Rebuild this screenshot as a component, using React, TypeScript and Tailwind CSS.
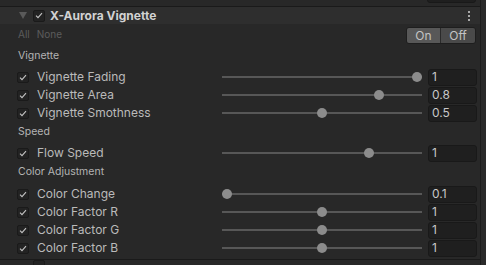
import React from "react";

type Row = { label: string; value: string; t: number };

const sections: { title: string; titleH: string; pad: string; rows: Row[] }[] = [
  {
    title: "Vignette",
    titleH: "h-[24px]",
    pad: "",
    rows: [
      { label: "Vignette Fading", value: "1", t: 1 },
      { label: "Vignette Area", value: "0.8", t: 0.8 },
      { label: "Vignette Smothness", value: "0.5", t: 0.5 },
    ],
  },
  { title: "Speed", titleH: "h-[20px]", pad: "pt-[2px]", rows: [{ label: "Flow Speed", value: "1", t: 0.747 }] },
  {
    title: "Color Adjustment",
    titleH: "h-[20px]",
    pad: "pt-[3px]",
    rows: [
      { label: "Color Change", value: "0.1", t: 0 },
      { label: "Color Factor R", value: "1", t: 0.5 },
      { label: "Color Factor G", value: "1", t: 0.5 },
      { label: "Color Factor B", value: "1", t: 0.5 },
    ],
  },
];

function Check({ big = false }: { big?: boolean }) {
  return (
    <div
      className={`flex items-center justify-center rounded-[2px] border border-[#1a1a1a] bg-[#232323] ${
        big ? "h-[12px] w-[12px]" : "h-[11px] w-[12px]"
      }`}
    >
      <svg width="8" height="7" viewBox="0 0 8 7" fill="none">
        <path d="M1 3.6 L3 5.6 L7 1.2" stroke="#c4c4c4" strokeWidth="1.1" />
      </svg>
    </div>
  );
}

function Slider({ t }: { t: number }) {
  return (
    <div className="relative h-[18px] w-[200px]">
      <div className="absolute left-0 right-0 top-[8px] h-[2px] bg-[#575757]" />
      <div
        className="absolute top-[4px] h-[10px] w-[10px] rounded-full bg-[#8c8c8c]"
        style={{ left: t * 190 }}
      />
    </div>
  );
}

function ValueField({ value }: { value: string }) {
  return (
    <div className="flex h-[17px] w-[49px] items-center rounded-[3px] border border-[#191919] bg-[#1f1f1f] pl-[3px] text-[12px] text-[#c8c8c8]">
      {value}
    </div>
  );
}

export default function App() {
  return (
    <div
      className="flex h-[265px] w-[486px] overflow-hidden bg-[#282828] text-[#bdbdbd]"
      style={{ fontFamily: "Inter, 'Noto Sans', sans-serif" }}
    >
      <div className="flex w-[480px] flex-col">
        <div className="flex h-[6px] justify-end pr-[4px]">
          <div className="-mt-[14px] h-[17px] w-[49px] rounded-[3px] border border-[#191919] bg-[#1f1f1f]" />
        </div>
        <div className="h-px bg-[#1a1a1a]" />
        <div className="flex h-[17px] items-center bg-[#2e2e2e]">
          <svg className="ml-[19px]" width="8" height="7" viewBox="0 0 8 7">
            <path d="M0 0 H8 L4 7 Z" fill="#5a5a5a" />
          </svg>
          <div className="ml-[6px]">
            <Check big />
          </div>
          <div className="ml-[5px] text-[12px] font-bold text-[#d2d2d2]">X-Aurora Vignette</div>
          <div className="ml-auto mr-[10px] flex flex-col gap-[2px]">
            <div className="h-[2px] w-[2px] bg-[#a8a8a8]" />
            <div className="h-[2px] w-[2px] bg-[#a8a8a8]" />
            <div className="h-[2px] w-[2px] bg-[#a8a8a8]" />
          </div>
        </div>
        <div className="flex h-[20px] items-center">
          <div className="ml-[18px] flex gap-[7px] text-[10px] text-[#5c5c5c]">
            <span>All</span>
            <span>None</span>
          </div>
          <div className="ml-auto mr-[4px] mt-[3px] flex h-[17px] overflow-hidden rounded-[3px] border border-[#1e1e1e] text-[12px] text-[#c4c4c4]">
            <div className="flex w-[33px] items-center justify-center bg-[#585858]">On</div>
            <div className="w-px bg-[#2a2a2a]" />
            <div className="flex w-[34px] items-center justify-center bg-[#4a4a4a]">Off</div>
          </div>
        </div>
        <div className="flex flex-col">
          {sections.map((s) => (
            <div key={s.title} className="flex flex-col">
              <div className={`flex items-center pl-[18px] text-[10.5px] text-[#b4b4b4] ${s.titleH}`}>
                {s.title}
              </div>
              <div className={s.pad}>
                {s.rows.map((r) => (
                  <div key={r.label} className="flex h-[18px] items-center">
                    <div className="ml-[17px]">
                      <Check />
                    </div>
                    <div className="ml-[8px] w-[165px] text-[12px] text-[#bababa]">{r.label}</div>
                    <div className="ml-auto mr-[6px]">
                      <Slider t={r.t} />
                    </div>
                    <div className="mr-[3px]">
                      <ValueField value={r.value} />
                    </div>
                  </div>
                ))}
              </div>
            </div>
          ))}
        </div>
        <div className="mt-auto h-px bg-[#1a1a1a]" />
        <div className="flex h-[5px] pl-[33px]">
          <div className="h-[12px] w-[12px] rounded-[2px] border border-[#1a1a1a] bg-[#232323]" />
        </div>
      </div>
      <div className="w-px bg-[#1c1c1c]" />
      <div className="flex-1 bg-[#2a2a2a]" />
    </div>
  );
}
